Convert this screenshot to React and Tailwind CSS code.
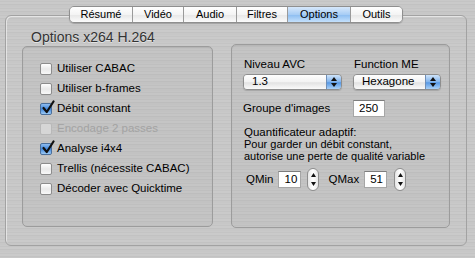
import React from 'react';

const metal =
  'bg-[repeating-linear-gradient(180deg,#c9c9c9_0px,#c9c9c9_1px,#c4c4c4_1px,#c4c4c4_2px,#cacaca_2px,#cacaca_4px,#c2c2c2_4px,#c2c2c2_5px,#c7c7c7_5px,#c7c7c7_7px)]';

const tabs = [
  { label: 'Résumé', w: 'w-[62px]' },
  { label: 'Vidéo', w: 'w-[51px]' },
  { label: 'Audio', w: 'w-[53px]' },
  { label: 'Filtres', w: 'w-[51px]' },
  { label: 'Options', w: 'w-[63px]', active: true },
  { label: 'Outils', w: 'w-[52px]' },
];

const options = [
  { label: 'Utiliser CABAC' },
  { label: 'Utiliser b-frames' },
  { label: 'Débit constant', checked: true },
  { label: 'Encodage 2 passes', disabled: true },
  { label: 'Analyse i4x4', checked: true },
  { label: 'Trellis (nécessite CABAC)' },
  { label: 'Décoder avec Quicktime' },
];

function Checkbox({ checked, disabled }) {
  if (checked) {
    return (
      <span className="relative w-[12px] h-[12px] rounded-[2px] border border-[#4a6f9c] bg-[linear-gradient(180deg,#8fbdf0,#3f86dc_50%,#9ccaf5)]">
        <svg className="absolute -top-[4px] left-[1px]" width="13" height="14" viewBox="0 0 13 14">
          <path d="M1.5 8 L4.8 12 L11.5 1.5" fill="none" stroke="#111" strokeWidth="2.2" strokeLinecap="round" strokeLinejoin="round" />
        </svg>
      </span>
    );
  }
  return (
    <span
      className={`w-[12px] h-[12px] rounded-[2px] border ${
        disabled
          ? 'border-[#b8b8b8] bg-[#d6d6d6]'
          : 'border-[#8c8c8c] bg-[linear-gradient(180deg,#ffffff,#e9e9e9_50%,#f8f8f8)]'
      }`}
    />
  );
}

function Popup({ value, w }) {
  return (
    <div className={`flex h-[16px] ${w} rounded-[4px] border border-[#8e8e8e] overflow-hidden shadow-[0_1px_1px_rgba(0,0,0,0.15)]`}>
      <div className="flex-1 flex items-center pl-[8px] bg-[linear-gradient(180deg,#ffffff,#f2f2f2_50%,#e2e2e2_55%,#fafafa)] text-[11.5px] text-black leading-none">
        {value}
      </div>
      <div className="w-[15px] flex flex-col items-center justify-center gap-[2px] border-l border-[#6f8fb8] bg-[linear-gradient(180deg,#cfe4fa,#7fb2ec_50%,#5798e4_55%,#a9d0f7)]">
        <svg width="6" height="4" viewBox="0 0 6 4"><path d="M0 4 L3 0 L6 4Z" fill="#111" /></svg>
        <svg width="6" height="4" viewBox="0 0 6 4"><path d="M0 0 L3 4 L6 0Z" fill="#111" /></svg>
      </div>
    </div>
  );
}

function Field({ value, w }) {
  return (
    <div className={`${w} h-[17px] flex items-center pl-[5px] bg-white border border-[#a6a6a6] border-t-[#7d7d7d] text-[11.5px] text-black leading-none`}>
      {value}
    </div>
  );
}

function Stepper() {
  return (
    <div className="w-[12px] h-[23px] rounded-full border border-[#8e8e8e] bg-[linear-gradient(90deg,#e6e6e6,#ffffff_50%,#e6e6e6)] flex flex-col items-center justify-between py-[4px]">
      <svg width="5" height="4" viewBox="0 0 5 4"><path d="M0 4 L2.5 0 L5 4Z" fill="#111" /></svg>
      <svg width="5" height="4" viewBox="0 0 5 4"><path d="M0 0 L2.5 4 L5 0Z" fill="#111" /></svg>
    </div>
  );
}

export default function App() {
  return (
    <div
      className={`w-[475px] h-[258px] overflow-hidden ${metal} pt-[6px] pl-[5px] text-black`}
      style={{ fontFamily: '"Liberation Sans", Arial, sans-serif' }}
    >
      {/* tab strip */}
      <div className="relative z-10 w-[462px] flex justify-center">
        <div className="flex h-[17px] rounded-[5px] border border-[#8f8f8f] overflow-hidden shadow-[0_1px_1px_rgba(0,0,0,0.2)]">
          {tabs.map((t, i) => (
            <div
              key={t.label}
              className={`${t.w} flex items-center justify-center text-[11px] leading-none ${
                i > 0 ? 'border-l border-[#9a9a9a]' : ''
              } ${
                t.active
                  ? 'bg-[linear-gradient(180deg,#d7e8fb,#a8cdf5_50%,#8fbff2_55%,#c4e0fb)]'
                  : 'bg-[linear-gradient(180deg,#ffffff,#f4f4f4_50%,#e8e8e8_55%,#fbfbfb)]'
              }`}
            >
              {t.label}
            </div>
          ))}
        </div>
      </div>

      {/* tab content box */}
      <div className="-mt-[8px] w-[462px] h-[231px] rounded-[6px] border border-[#a2a2a2] shadow-[inset_1px_1px_0_rgba(255,255,255,0.5)] flex pl-[16px] pt-[14px] gap-[18px]">
        {/* left column */}
        <div className="w-[191px] flex flex-col">
          <div className="h-[16px] pl-[9px] text-[14px] leading-[14px] text-[#333] [text-shadow:0_1px_0_rgba(255,255,255,0.5)]">
            Options x264 H.264
          </div>
          <div className="h-[181px] rounded-[5px] border border-[#9c9c9c] bg-black/[0.025] shadow-[inset_0_1px_1px_rgba(0,0,0,0.08)] pt-[12px] pl-[17px] flex flex-col">
            {options.map((o) => (
              <div key={o.label} className="h-[20px] flex items-center gap-[5px]">
                <Checkbox checked={o.checked} disabled={o.disabled} />
                <span className={`text-[11.5px] leading-none ${o.disabled ? 'text-[#a3a3a3]' : 'text-black'}`}>
                  {o.label}
                </span>
              </div>
            ))}
          </div>
        </div>

        {/* right column */}
        <div className="mt-[14px] w-[219px] h-[184px] rounded-[5px] border border-[#9c9c9c] bg-black/[0.025] shadow-[inset_0_1px_1px_rgba(0,0,0,0.08)] pl-[11px] pt-[13px] flex flex-col">
          <div className="flex gap-[11px]">
            <div className="flex flex-col gap-[3px]">
              <span className="text-[11.5px] leading-[13px] pl-[1px]">Niveau AVC</span>
              <Popup value="1.3" w="w-[99px]" />
            </div>
            <div className="flex flex-col gap-[3px]">
              <span className="text-[11.5px] leading-[13px] pl-[1px]">Function ME</span>
              <Popup value="Hexagone" w="w-[88px]" />
            </div>
          </div>

          <div className="mt-[10px] flex items-center">
            <span className="w-[110px] text-[11.5px] leading-none">Groupe d'images</span>
            <Field value="250" w="w-[32px]" />
          </div>

          <div className="mt-[9px] text-[11px] leading-[12px] pl-[1px]">
            <div className="text-[11.5px]">Quantificateur adaptif:</div>
            <div>Pour garder un débit constant,</div>
            <div>autorise une perte de qualité variable</div>
          </div>

          <div className="mt-[6px] flex items-center pl-[3px]">
            <span className="text-[11.5px] leading-none mr-[5px]">QMin</span>
            <Field value="10" w="w-[23px]" />
            <div className="ml-[6px] mr-[9px]"><Stepper /></div>
            <span className="text-[11.5px] leading-none mr-[5px]">QMax</span>
            <Field value="51" w="w-[23px]" />
            <div className="ml-[7px]"><Stepper /></div>
          </div>
        </div>
      </div>
    </div>
  );
}
